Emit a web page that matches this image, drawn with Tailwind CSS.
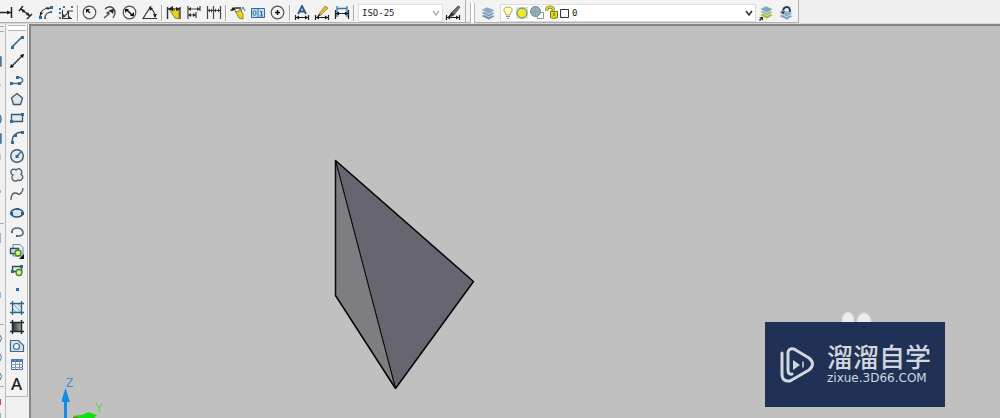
<!DOCTYPE html>
<html lang="zh-CN">
<head>
<meta charset="utf-8">
<title>CAD</title>
<script src="https://cdn.jsdelivr.net/npm/@tailwindcss/browser@4"></script>
</head>
<body class="bg-[#f0f0f0] font-['Liberation_Sans','Noto_Sans_CJK_SC',sans-serif]">
<div class="flex h-screen flex-col overflow-hidden">
<header class="flex h-6 shrink-0 items-start border-b border-[#d8d8d8] bg-[#efefef]">
  <div role="toolbar" aria-label="标注" class="-ml-1 flex h-[23px] items-center border-r border-b border-[#b0b0b0] bg-[#f3f3f3] pt-[3px] pr-[2px] [&_button]:flex [&_button]:h-5 [&_button]:w-5 [&_button]:items-center [&_button]:justify-center [&_svg]:size-4">
    <button aria-label="线性"><svg viewBox="0 0 16 16" fill="none" stroke="#222"><path d="M0 7.500h14M13.500 2v11" stroke-width="1.500"/><path d="m13 7.500-4-2v4z" fill="#222" stroke="none"/></svg></button>
    <button aria-label="对齐"><svg viewBox="0 0 16 16" fill="none" stroke="#222"><path d="m3 4 9 7M1 6l4-5M9 14l5-5" stroke-width="1.400"/><path d="M3 4l4 1-2 3zM12 11l-4-1 2-3z" fill="#222" stroke="none"/></svg></button>
    <button aria-label="弧长"><svg viewBox="0 0 16 16" fill="none" stroke="#444"><path d="M2 11Q3 3 12 3M7 13q0-5 6-6" stroke-width="1.200"/><path d="M1 11h3v3H1zM12 1h3v3h-3zM6 12h2v2H6zM12 6h2v2h-2z" fill="#2e6ca6" stroke="none"/><path d="m2 11 0-4 3 1zM12 3 8 2l2 3z" fill="#222" stroke="none"/></svg></button>
    <button aria-label="坐标"><svg viewBox="0 0 16 16" fill="none" stroke="#333"><path d="M4.500 5v8.500H14M5 12l4-3 1-3h5M10.500 6v7" stroke-width="1.100"/><path d="M1 3h2v2H1zM1 7h2v2H1zM1 12h2v2H1zM5 1h2v2H5zM13 1h2v2h-2z" fill="#3b77aa" stroke="none"/><path d="m5 9 3 3H5zM10 10l3 3h-3z" fill="#333" stroke="none"/></svg></button>
    <span class="mx-[1px] h-4 w-[2px] border-l border-[#a8a8a8] bg-white"></span>
    <button aria-label="半径"><svg viewBox="0 0 16 16" fill="none" stroke="#555"><circle cx="7.500" cy="7.500" r="6.300" stroke-width="1.200"/><path d="m8 8-3-3" stroke="#111" stroke-width="1.300"/><path d="m4 4 4 0-4 4z" fill="#111" stroke="none"/></svg></button>
    <button aria-label="折弯"><svg viewBox="0 0 16 16" fill="none" stroke="#444"><path d="M3 4q4-4 8-1 4 4 0 10M2 13l5-4-2-1 6-3" stroke-width="1.300"/><path d="m12 4-1 5-4-4z" fill="#222" stroke="none"/></svg></button>
    <button aria-label="直径"><svg viewBox="0 0 16 16" fill="none" stroke="#555"><circle cx="7.500" cy="7.500" r="6.300" stroke-width="1.200"/><path d="m4 4 7 7" stroke="#111" stroke-width="1.500"/><path d="M3 4h4L3 8zM12 11H8l4-4z" fill="#111" stroke="none"/></svg></button>
    <button aria-label="角度"><svg viewBox="0 0 16 16" fill="none" stroke="#333"><path d="M9 1 1 13.500h14M8 3q5 3 5 9" stroke-width="1.200"/><path d="m7 2 4 1-3 3zM13 13l-2-4h4z" fill="#222" stroke="none"/></svg></button>
    <span class="mx-[1px] h-4 w-[2px] border-l border-[#a8a8a8] bg-white"></span>
    <button aria-label="快速标注"><svg viewBox="0 0 16 16" fill="none" stroke="#333"><path d="M1.500 2v12M14 2v12M2 4h12" stroke-width="1.400"/><path d="m3 4 5 2 1-3 4 3v8l-4-1z" fill="#e6d51f" stroke="#796f19" stroke-width=".8"/><path d="m2 4 5-3v5zM14 4l-4-2v4z" fill="#222" stroke="none"/></svg></button>
    <button aria-label="基线"><svg viewBox="0 0 16 16" fill="none" stroke="#444"><path d="M2 1v13M14 1v5M10 7v6M2 4h12M2 10h8" stroke-width="1.200"/><path d="m2 4 3-2v4zM14 4l-3-2v4zM2 10l3-2v4zM10 10 7 8v4z" fill="#333" stroke="none"/></svg></button>
    <button aria-label="连续"><svg viewBox="0 0 16 16" fill="none" stroke="#444"><path d="M1.500 1v13M7.500 1v13M14.500 1v13M2 5.500h12" stroke-width="1.200"/><path d="m2 5.500 2-2v4zM7 5.500l-2-2v4zM8 5.500l2-2v4zM14 5.500l-2-2v4z" fill="#333" stroke="none"/></svg></button>
    <span class="mx-[1px] h-4 w-[2px] border-l border-[#a8a8a8] bg-white"></span>
    <button aria-label="快速引线"><svg viewBox="0 0 16 16" fill="none" stroke="#333"><path d="M2 5 5 3h6" stroke-width="1.300"/><path d="m11 6 2-4 2 4" stroke="#3973a5"/><path d="m0 6 3-4 3 3z" fill="#222" stroke="none"/><path d="m5 6 3 1 2-3 3 5v5l-4-1z" fill="#e6d51f" stroke="#796f19" stroke-width=".8"/></svg></button>
    <button aria-label="公差"><svg viewBox="0 0 16 16" fill="none" stroke="#2c6ba5"><path d="M1.500 3.500h13v9h-13zM8 4v8" fill="#c5dcee"/><ellipse cx="4.500" cy="8" rx="1.500" ry="2.500"/><path d="M10 6.500h1.500V11M10 11h3" stroke-width="1.200"/></svg></button>
    <button aria-label="圆心标记"><svg viewBox="0 0 16 16" fill="none" stroke="#555"><circle cx="7.500" cy="7.500" r="6.300" stroke-width="1.200"/><path d="M7.500 5v5M5 7.500h5" stroke="#111" stroke-width="1.500"/></svg></button>
    <span class="mx-[1px] h-4 w-[2px] border-l border-[#a8a8a8] bg-white"></span>
    <button aria-label="编辑标注"><svg viewBox="0 0 16 16" fill="none" stroke="#222"><path d="m4 9 4-8 4 8M5.500 6.500h5" stroke="#255b92" stroke-width="1.800"/><path d="M1.500 10v5M14.500 10v5M2 12.500h12" stroke-width="1.200"/><path d="m2 12.500 3-2v4zM14 12.500l-3-2v4z" fill="#111" stroke="none"/></svg></button>
    <button aria-label="编辑标注文字"><svg viewBox="0 0 16 16" fill="none" stroke="#222"><path d="m5 9 6-8 3 2-7 7-3 1z" fill="#e3bf3d" stroke="#8d7428" stroke-width=".7"/><path d="m5 9-2 3 4-2z" fill="#333" stroke="none"/><path d="M1.500 10v5M14.500 10v5M2 12.500h12" stroke-width="1.200"/><path d="m2 12.500 3-2v4zM14 12.500l-3-2v4z" fill="#111" stroke="none"/></svg></button>
    <button aria-label="标注更新"><svg viewBox="0 0 16 16" fill="none" stroke="#222"><path d="M3 1v11M13 1v11M3 3.500h10" stroke="#3973a5" stroke-width="1.300"/><path d="M1.500 5v9M14.500 5v9M2 8.500h12" stroke-width="1.200"/><path d="m2 8.500 3-2v4zM14 8.500l-3-2v4z" fill="#111" stroke="none"/></svg></button>
    <span class="mx-[1px] h-4 w-[2px] border-l border-[#a8a8a8] bg-white"></span>
    <div class="relative ml-[2px] h-[18px] w-[85px]">
      <select aria-label="标注样式" class="block h-[18px] w-full appearance-none border border-[#ddd] bg-white pl-[3px] font-['DejaVu_Sans_Mono',monospace] text-[9px] leading-4 text-[#222]"><option>ISO-25</option></select>
      <svg class="pointer-events-none absolute top-[1px] right-0" viewBox="0 0 16 16" fill="none" stroke="#b5b5b5" stroke-width="1.500"><path d="m6 6 3 4 3-4"/></svg>
    </div>
    <button aria-label="标注样式管理"><svg viewBox="0 0 16 16" fill="none" stroke="#222"><path d="m6 8 7-7 2 1-6 8-4 2z" fill="#647078" stroke="#444" stroke-width=".7"/><path d="m7 7 2 3-6 2z" fill="#283038" stroke="none"/><path d="M1.500 10v5M14.500 10v5M2 12.500h12" stroke-width="1.200"/><path d="m2 12.500 3-2v4zM14 12.500l-3-2v4z" fill="#111" stroke="none"/></svg></button>
  </div>
  <div role="toolbar" aria-label="图层" class="flex h-[23px] items-center border-r border-b border-[#b0b0b0] bg-[#f3f3f3] pt-[3px] pr-[2px] pl-1 [&_button]:flex [&_button]:h-5 [&_button]:w-5 [&_button]:items-center [&_button]:justify-center">
    <span class="mr-[3px] h-5 w-[5px] border-x border-[#b8b8b8] bg-white"></span>
    <button aria-label="图层特性"><svg class="size-4" viewBox="0 0 16 16" stroke="#f3f3f3" stroke-width=".6"><path d="m1 11 6-3 8 3-6 4z" fill="#7391b3"/><path d="m1 8 6-3 8 3-6 4z" fill="#809dbd"/><path d="m1 5 6-3 8 3-6 4z" fill="#8ba8c5"/></svg></button>
    <div class="relative ml-[2px] h-[18px] w-[256px]">
      <select aria-label="当前图层" class="block h-[18px] w-full appearance-none border border-[#ddd] bg-white pl-[71px] font-['DejaVu_Sans_Mono',monospace] text-[9px] leading-4 text-[#222]"><option>0</option></select>
      <svg class="pointer-events-none absolute top-[1px] left-px h-4 w-[70px]" viewBox="0 0 70 16" fill="none">
        <path d="M5 10Q5 8 3 6q-1-4 4-4t4 4Q9 8 9 10z" fill="#fffac0" stroke="#b2aa54"/><path d="M5 11.500h4M6 13.500h2" stroke="#888"/>
        <path d="M15 2h12v12H15z" fill="#dedede"/><circle cx="21" cy="8" r="5" fill="#eee82b" stroke="#4c8290"/>
        <path d="M36.500 7.500h6v6h-6z" fill="#fff" stroke="#829ba5"/><circle cx="34.500" cy="6.500" r="5" fill="#98b4bc" stroke="#64878f"/><path d="M34.500 2v9M30 6.500h9M31 3.500l7 6M31 9.500l7-6" stroke="#83a5ac"/>
        <path d="M46 6q-1-4 3-4t3 4v2" stroke="#777514" stroke-width="3"/><path d="M46 6q-1-4 3-4t3 4v2" stroke="#e6df26" stroke-width="1.500"/><path d="M49.500 6.500h7v6q-4 2-7 0z" fill="#e1d91d" stroke="#777514"/><path d="M53 8v3" stroke="#555"/>
        <path d="M59.500 4.500h8v8h-8z" fill="#fff" stroke="#333"/>
      </svg>
      <svg class="pointer-events-none absolute top-[1px] right-0 size-4" viewBox="0 0 16 16" fill="none" stroke="#333" stroke-width="1.600"><path d="m6 6 3 4 3-4"/></svg>
    </div>
    <button aria-label="置为当前"><svg class="size-4" viewBox="0 0 16 16" stroke="#f3f3f3" stroke-width=".6"><path d="m2 10 6-3 7 3-6 4z" fill="#b7b224"/><path d="m2 7 6-3 7 3-6 4z" fill="#a5bd8a"/><path d="m2 4 6-3 7 3-6 4z" fill="#79a9c7"/><path d="M1 15l2-2-2-1h4v4l-1-2-2 2z" fill="#222" stroke="none"/></svg></button>
    <button aria-label="上一个图层"><svg class="size-4" viewBox="0 0 16 16" stroke="#f3f3f3" stroke-width=".6"><path d="m1 11 6-3 8 3-6 4z" fill="#7da0bb"/><path d="m1 8 6-3 8 3-6 4z" fill="#8db0ca"/><path d="M5 7q0-5 4-5 3 0 3 5" fill="none" stroke="#223d61" stroke-width="2"/><path d="M2 6h6L5 10z" fill="#223d61"/></svg></button>
  </div>
</header>
<div class="flex min-h-0 flex-1">
  <aside aria-label="修改" class="w-[6px] shrink-0 overflow-hidden border-r border-[#bbb]">
    <svg class="h-[394px] w-[5px]" viewBox="0 0 5 394" fill="none" stroke="#47789e"><path d="M0 2.500h4M0 7.500h4" stroke="#aaa"/><path d="M0 33h1v9H0zM0 110h1v9H0zM0 91q2 4 0 8" stroke-width="1.500"/><path d="M0 60v2M0 130v6" stroke="#a98"/><path d="M0 199.500h4M0 300.500h4M0 362.500h4" stroke="#aaa"/><path d="M0 166v3M0 209v10M0 268v6M0 311q3 3 0 7M0 330q3 3 0 7M0 349q3 3 0 7"/><path d="M0 375v6" stroke="#c44" stroke-width="2"/><path d="M0 389v5" stroke="#285"/></svg>
  </aside>
  <nav aria-label="绘图" class="flex h-[373px] w-[22px] shrink-0 flex-col items-center border-r border-b border-[#b5b5b5] bg-[#f3f3f3] [&_button]:flex [&_button]:h-[19px] [&_button]:w-5 [&_button]:shrink-0 [&_button]:items-center [&_button]:justify-center [&_svg]:size-4">
    <span class="mt-px mb-px h-[6px] w-[18px] shrink-0 border-y border-[#b8b8b8] bg-white"></span>
    <button aria-label="直线"><svg viewBox="0 0 16 16" stroke="#3d5262"><path d="M3 13 13 3" stroke-width="1.400"/><path d="M2 12h3v3H2zM12 2h3v3h-3z" fill="#2c6b9f" stroke="none"/></svg></button>
    <button aria-label="构造线"><svg viewBox="0 0 16 16" stroke="#222"><path d="M2 14 14 2" stroke-width="1.300"/><path d="m1 15 1-4 3 3zM15 1l-4 1 3 3z" fill="#111" stroke="none"/><path d="M8 6h2v2H8zM5 9h2v2H5z" fill="#2c6b9f" stroke="none"/></svg></button>
    <button aria-label="多段线"><svg viewBox="0 0 16 16" fill="none" stroke="#4b7186"><path d="M2 11.500h9q4-2 2-5-2-2-5-1" stroke-width="1.500"/><path d="M1 10h3v3H1zM9 10h3v3H9zM7 4h3v3H7z" fill="#2c6b9f" stroke="none"/></svg></button>
    <button aria-label="正多边形"><svg viewBox="0 0 16 16"><path d="m8 2.500 5.500 4.500-2 6.500h-7L2.500 7z" fill="#dce8ee" stroke="#44535d" stroke-width="1.300"/></svg></button>
    <button aria-label="矩形"><svg viewBox="0 0 16 16"><path d="M2.500 4.500h11v7h-11z" fill="#e0eaf0" stroke="#3e5668" stroke-width="1.300"/><path d="M1 10h3v3H1zM12 3h3v3h-3z" fill="#2c6b9f"/></svg></button>
    <button aria-label="圆弧"><svg viewBox="0 0 16 16" fill="none"><path d="M3 14Q3 3 14 3" stroke="#485b6a" stroke-width="1.400"/><path d="M2 12h3v3H2zM12 2h3v3h-3zM5 5h3v3H5z" fill="#2c6b9f"/></svg></button>
    <button aria-label="圆"><svg viewBox="0 0 16 16"><circle cx="8" cy="8" r="6.300" fill="#e2edf5" stroke="#42596b" stroke-width="1.400"/><path d="m8 8 4-4" stroke="#2c6b9f" stroke-width="1.500"/><path d="M6.500 7h3v3h-3z" fill="#2c6b9f"/></svg></button>
    <button aria-label="修订云线"><svg viewBox="0 0 16 16"><path d="M4 8A3 3 0 1 1 7 3a3 3 0 1 1 5 4.500A3 3 0 1 1 9 13a3.200 3.200 0 1 1-5-5z" fill="#e5edf3" stroke="#465967" stroke-width="1.300"/></svg></button>
    <button aria-label="样条曲线"><svg viewBox="0 0 16 16" fill="none" stroke="#4b5660" stroke-width="1.300"><path d="M2 14q0-7 4-7 2 0 3 1t3-1q2-2 2-5"/></svg></button>
    <button aria-label="椭圆"><svg viewBox="0 0 16 16"><ellipse cx="8" cy="8" rx="6" ry="4" fill="#d7e8f1" stroke="#354e60" stroke-width="1.500"/><path d="M1 7h3v3H1zM12 7h3v3h-3zM7 3h3v2H7z" fill="#1c639d"/></svg></button>
    <button aria-label="椭圆弧"><svg viewBox="0 0 16 16" fill="none"><path d="M3 8q0-4 5-4t6 4-5 4" stroke="#4d687c" stroke-width="1.600"/><path d="M2 7h2v2H2zM7 11h2v2H7z" fill="#2c6b9f"/></svg></button>
    <button aria-label="插入块"><svg viewBox="0 0 16 16"><path d="M4 1.500h7l3 3V13H4z" fill="#e2edf7" stroke="#6986a3"/><path d="M1.500 5.500h8v5h-8z" fill="#d1e1ea" stroke="#344f60" stroke-width="1.300"/><circle cx="9" cy="10" r="3" fill="#d9ed83" stroke="#4d7e26" stroke-width="1.300"/><path d="M15 11v5h-5z" fill="#111"/></svg></button>
    <button aria-label="创建块"><svg viewBox="0 0 16 16"><path d="M3.500 4.500h9v5h-9z" fill="#dbe8ed" stroke="#314f56" stroke-width="1.300"/><path d="M2 8h3v3H2zM11 3h3v3h-3z" fill="#286a78"/><circle cx="10" cy="10.500" r="3" fill="#d7eb9b" stroke="#4b7e32" stroke-width="1.300"/></svg></button>
    <button aria-label="点"><svg viewBox="0 0 16 16"><path d="M7 7h3v3H7z" fill="#2871ad"/></svg></button>
    <button aria-label="图案填充"><svg viewBox="0 0 16 16" stroke="#2f6485" fill="none"><path d="M3.500 3.500h9v9h-9z" fill="#d7e9f4"/><path d="m3 8 5 5M4 4l9 9M8 3l5 5" stroke="#7fabc7"/><path d="M1 3.500h14M1 12.500h14M3.500 1v14M12.500 1v14" stroke-width="1.300"/></svg></button>
    <button aria-label="渐变色"><svg viewBox="0 0 16 16" stroke="#202a32"><defs><linearGradient id="grad"><stop stop-color="#252d33"/><stop offset="1" stop-color="#a9aaa2"/></linearGradient></defs><path d="M3.500 3.500h9v9h-9z" fill="url(#grad)"/><path d="M1 3.500h14M1 12.500h14M3.500 1v14M12.500 1v14" stroke-width="1.500"/></svg></button>
    <button aria-label="面域"><svg viewBox="0 0 16 16"><path d="M1.500 13.500v-11h8l5 5v6z" fill="#d4e3ee" stroke="#3f6788" stroke-width="1.200"/><circle cx="7.500" cy="8.500" r="3" fill="#fff" stroke="#3f6788" stroke-width="1.200"/></svg></button>
    <button aria-label="表格"><svg viewBox="0 0 16 16"><path d="M2.500 2.500h11v10h-11z" fill="#fff" stroke="#4167a0"/><path d="M2 2h12v3H2z" fill="#4778bc"/><path d="M6.500 3v10M10.500 3v10M2 7.500h12M2 10.500h12" stroke="#7c9bc5"/></svg></button>
    <button aria-label="多行文字" class="font-['Noto_Sans',sans-serif] text-[17px] leading-none font-medium text-[#222]">A</button>
  </nav>
  <main class="relative ml-px min-w-0 flex-1 overflow-hidden border-t-2 border-l-2 border-[#858585] bg-[#c0c0c0]">
    <svg class="absolute top-[133px] left-[303px] h-[232px] w-[142px]" viewBox="0 0 142 232" stroke="#080808" stroke-linejoin="round"><path d="M1.500 1.500 139.500 122.500 61.500 229.500z" fill="#666570"/><path d="M1.500 1.500v135l60 93z" fill="#7e7d81"/><path d="M61.500 229.500 1.500 136.500V1.500l138 121-78 107" fill="none" stroke-width="1.500"/></svg>
    <svg class="absolute bottom-0 left-[31px] h-10 w-[50px]" viewBox="0 0 50 40" fill="none"><path d="M3.500 40V20" stroke="#168be2" stroke-width="3"/><path d="M3.500 10-1 24h9z" fill="#168be2"/><path d="m11 40 13-3" stroke="#974d19" stroke-width="1.500"/><path d="m10 38 10-1 6-3 9 3-3 3H18z" fill="#12df12"/></svg>
    <span class="absolute bottom-[29px] left-[35px] text-[12px] leading-3 text-[#3991d8]">Z</span>
    <span class="absolute bottom-[4px] left-[64px] text-[12px] leading-3 text-[#54d554]">Y</span>
    <svg class="absolute right-[128px] bottom-[95px] h-3 w-8" viewBox="0 0 32 12" fill="#eee" stroke="#ddd"><ellipse cx="8" cy="10" rx="6" ry="9"/><ellipse cx="24" cy="11" rx="7" ry="9"/></svg>
    <aside class="absolute right-[55px] bottom-[11px] flex h-[85px] w-[180px] items-center gap-3 bg-[#213156] pl-[15px] text-[#d2d6de]">
      <svg class="h-9 w-[35px] shrink-0" viewBox="0 0 35 36" fill="none" stroke="currentColor" stroke-linecap="round" stroke-linejoin="round"><path d="M2 6v21q0 8 8 7l19-11q7-6 0-12L14 2Q8 1 8 6v17q0 5 4 4" stroke-width="3"/><path d="m13 13 7 5-7 5z" fill="currentColor" stroke="none"/><path d="M23 15v5" stroke-width="1.500"/></svg>
      <div class="flex flex-col gap-1 whitespace-nowrap pb-px"><div class="font-['Noto_Sans_CJK_SC',sans-serif] text-[26px] leading-6 font-medium">溜溜自学</div><div class="font-['DejaVu_Sans',sans-serif] text-[12px] leading-3">zixue.3D66.COM</div></div>
    </aside>
  </main>
</div>
</div>
</body>
</html>
